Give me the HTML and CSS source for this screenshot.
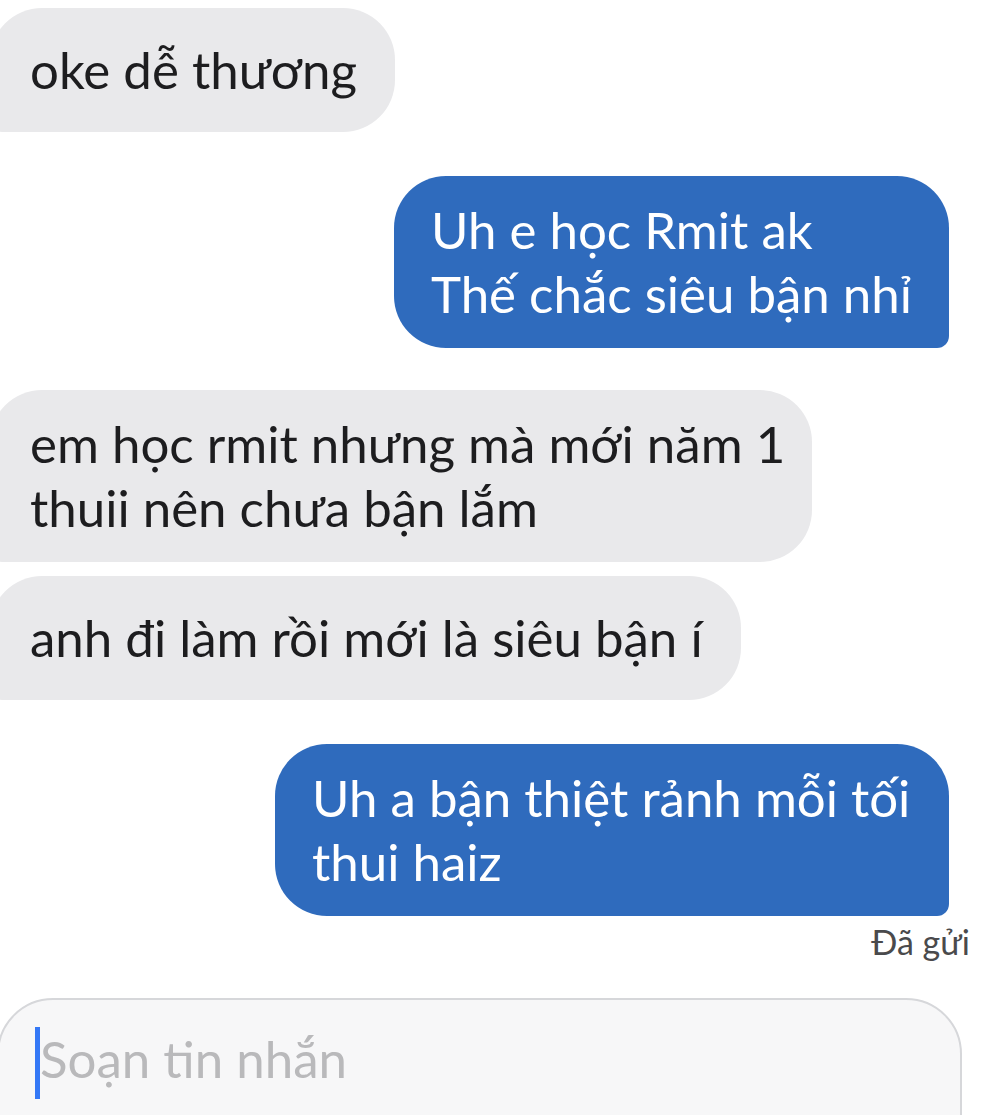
FILE: index.html
```html
<!DOCTYPE html>
<html lang="vi">
<head>
<meta charset="utf-8">
<title>Tin nhắn</title>
<link rel="stylesheet" href="styles.css">
</head>
<body>
<main class="thread">
  <div class="row row-in">
    <div class="bubble bubble-in single">oke dễ thương</div>
  </div>
  <div class="row row-out gap-lg">
    <div class="bubble bubble-out">Uh e học Rmit ak<br>Thế chắc siêu bận nhỉ</div>
  </div>
  <div class="row row-in gap-md">
    <div class="bubble bubble-in wide-in">em học rmit nhưng mà mới năm 1<br>thuii nên chưa bận lắm</div>
  </div>
  <div class="row row-in gap-sm">
    <div class="bubble bubble-in single">anh đi làm rồi mới là siêu bận í</div>
  </div>
  <div class="row row-out gap-lg">
    <div class="bubble bubble-out wide-out">Uh a bận thiệt rảnh mỗi tối<br>thui haiz</div>
  </div>
  <div class="status">Đã gửi</div>
  <div class="composer">
    <span class="caret"></span>
    <span class="placeholder">Soạn tin nhắn</span>
  </div>
</main>
</body>
</html>
```

FILE: styles.css
```css
html, body {
  margin: 0;
  padding: 0;
  background: #ffffff;
  overflow: hidden;
}

.thread {
  width: 998px;
  height: 1115px;
  display: flex;
  flex-direction: column;
  padding-top: 8px;
  box-sizing: border-box;
  font-family: "Lato", "Liberation Sans", sans-serif;
  overflow: hidden;
}

.row {
  display: flex;
}

.row-in {
  justify-content: flex-start;
}

.row-out {
  justify-content: flex-end;
  padding-right: 49px;
}

.gap-lg {
  margin-top: 44px;
}

.gap-md {
  margin-top: 42px;
}

.gap-sm {
  margin-top: 14px;
}

.bubble {
  box-sizing: border-box;
  font-size: 51px;
  line-height: 64px;
  padding: 22px 37px;
  white-space: nowrap;
}

.bubble.single {
  min-height: 124px;
  display: flex;
  align-items: center;
  padding-top: 0;
  padding-bottom: 0;
}

.bubble-in {
  background: #e9e9eb;
  color: #1d1d1f;
  margin-left: -10px;
  padding-left: 40px;
  padding-right: 38px;
  border-radius: 52px 52px 52px 12px;
}

.bubble-out {
  background: #2f6bbd;
  color: #ffffff;
  border-radius: 52px 52px 12px 52px;
}

.wide-in {
  width: 822px;
}

.wide-out {
  width: 674px;
}

.status {
  align-self: flex-end;
  margin-right: 28px;
  margin-top: 6px;
  font-size: 34px;
  line-height: 40px;
  color: #4a4a4c;
}

.composer {
  margin-top: 36px;
  margin-left: -3px;
  width: 965px;
  height: 200px;
  flex: none;
  box-sizing: border-box;
  border: 2px solid #d6d7da;
  border-radius: 56px;
  background: #f7f7f8;
  display: flex;
  align-items: flex-start;
  padding-left: 36px;
  padding-top: 27px;
}

.caret {
  width: 5px;
  height: 72px;
  background: #3478f6;
  flex: none;
}

.placeholder {
  font-size: 51px;
  line-height: 64px;
  color: #b9b9bb;
}
```
